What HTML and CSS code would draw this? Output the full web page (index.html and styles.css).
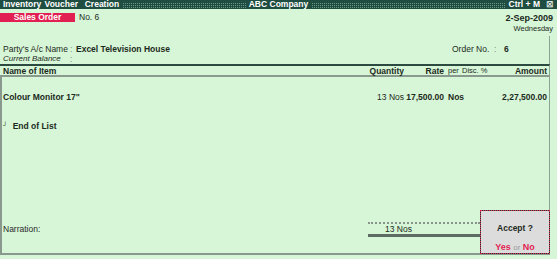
FILE: index.html
```html
<!DOCTYPE html>
<html lang="en">
<head>
  <meta charset="UTF-8">
  <title>Inventory Voucher Creation</title>
  <link rel="stylesheet" href="styles.css">
</head>
<body>

  <div class="titlebar">
    <div class="tb-side">
      <span class="tb-left">Inventory Voucher&nbsp; Creation</span>
      <span class="dots"></span>
    </div>
    <span class="tb-mid">ABC Company</span>
    <div class="tb-side">
      <span class="dots"></span>
      <span class="tb-right">Ctrl + M</span>
      <span class="close">&#x22A0;</span>
    </div>
  </div>

  <div class="head">
    <div class="row-top">
      <div class="vtype">Sales Order</div>
      <div class="vno">No. 6</div>
      <div class="date">
        <div class="d1">2-Sep-2009</div>
        <div class="d2">Wednesday</div>
      </div>
    </div>
    <div class="party">
      <div class="row-party">
        <span class="lbl">Party's A/c Name</span>
        <span class="colon">:</span>
        <b>Excel Television House</b>
        <span class="order">Order No.</span>
        <span class="colon wide">:</span>
        <b class="ordno">6</b>
      </div>
      <div class="row-bal">
        <span class="lbl">Current Balance</span>
        <span class="colon">:</span>
      </div>
    </div>
  </div>

  <div class="cols">
    <span class="c-name">Name of Item</span>
    <span class="c-qty">Quantity</span>
    <span class="c-rate">Rate</span>
    <span class="c-per">per</span>
    <span class="c-disc">Disc. %</span>
    <span class="c-amt">Amount</span>
  </div>

  <div class="body">
    <div class="item">
      <span class="c-name"><b>Colour Monitor 17"</b></span>
      <span class="c-qty">13 Nos</span>
      <span class="c-rate"><b>17,500.00</b></span>
      <span class="c-per"><b>Nos</b></span>
      <span class="c-disc"></span>
      <span class="c-amt">2,27,500.00</span>
    </div>
    <div class="eol"><span class="mark">&#x2518;</span> End of List</div>

    <div class="foot">
      <div class="narration">Narration:</div>
      <div class="total">
        <div class="total-val">13 Nos</div>
      </div>
      <div class="accept">
        <div class="q">Accept ?</div>
        <div class="yn"><b>Yes</b> <span class="or">or</span> <b>No</b></div>
      </div>
    </div>
  </div>

</body>
</html>
```

FILE: styles.css
```css
* {
  box-sizing: border-box;
}
body {
  margin: 0;
  background: #d7f6d7;
  font-family: "Liberation Sans", Arial, sans-serif;
  font-size: 8.5px;
  color: #1c2a22;
  width: 557px;
  height: 259px;
  overflow: hidden;
}

.titlebar {
  height: 9px;
  background: #1f4d41;
  color: #ffffff;
  font-weight: bold;
  font-size: 8.5px;
  line-height: 9px;
  display: grid;
  grid-template-columns: 1fr auto 1fr;
  align-items: center;
  padding: 0 3px;
  white-space: nowrap;
}
.tb-side {
  display: flex;
  align-items: center;
}
.dots {
  flex: 1;
  height: 6px;
  margin: 0 3px;
  background-image:
    linear-gradient(90deg, #1f4d41 1px, transparent 1px),
    linear-gradient(#1f4d41 1px, #6a9686 1px);
  background-size: 2px 2px;
}
.tb-left {
  word-spacing: 1px;
}
.close {
  margin-left: 6px;
  font-size: 9px;
  font-weight: normal;
}

.row-top {
  display: flex;
  align-items: flex-start;
  height: 27px;
  padding-top: 4px;
}
.vtype {
  width: 75px;
  height: 9px;
  line-height: 9px;
  background: #e21f52;
  color: #ffffff;
  font-weight: bold;
  text-align: center;
}
.vno {
  margin-left: 4px;
  line-height: 9px;
}
.date {
  margin-left: auto;
  margin-right: 4px;
  text-align: right;
}
.d1 {
  font-weight: bold;
  font-size: 9px;
  line-height: 10px;
}
.d2 {
  font-size: 7.5px;
  line-height: 11px;
}

.party {
  height: 28px;
  padding-top: 8px;
  border-right: 1px solid #8aa592;
  margin-right: 7px;
}
.row-party, .row-bal {
  display: flex;
  height: 10px;
  line-height: 10px;
  padding-left: 3px;
  white-space: nowrap;
}
.lbl {
  width: 67px;
  flex-shrink: 0;
}
.row-bal .lbl {
  font-style: italic;
  font-size: 8px;
}
.colon {
  width: 6px;
  color: #7c8a80;
}
.order {
  margin-left: auto;
  width: 42px;
}
.colon.wide {
  width: 10px;
}
.ordno {
  width: 45px;
}

.cols, .item {
  display: flex;
  align-items: center;
  padding-left: 3px;
  white-space: nowrap;
}
.cols {
  height: 13px;
  border-top: 2px solid #2c4a40;
  border-bottom: 2px solid #8a998e;
  border-right: 1px solid #8aa592;
  margin-right: 7px;
  font-weight: bold;
}
.cols .c-per, .cols .c-disc {
  font-weight: normal;
  font-size: 7.5px;
}
.c-name {
  flex: 1;
}
.c-qty {
  width: 60px;
  text-align: right;
}
.c-rate {
  width: 40px;
  text-align: right;
}
.c-per {
  width: 18px;
  padding-left: 4px;
}
.c-disc {
  width: 18px;
}
.c-amt {
  width: 69px;
  text-align: right;
  padding-right: 2px;
}

.body {
  height: 178px;
  border-left: 2px solid #8a998e;
  border-right: 1px solid #8aa592;
  border-bottom: 2px solid #8a998e;
  margin-right: 7px;
  display: flex;
  flex-direction: column;
}
.item {
  margin-top: 15px;
  height: 10px;
  padding-left: 1px;
}
.item .c-amt {
  font-weight: bold;
}
.eol {
  margin-top: 18px;
  line-height: 10px;
  padding-left: 1px;
  font-weight: bold;
}
.mark {
  font-size: 6px;
  vertical-align: 2px;
  margin-right: 3px;
}

.foot {
  margin-top: auto;
  display: flex;
  align-items: flex-end;
}
.narration {
  flex: 1;
  line-height: 10px;
  margin-bottom: 19px;
  padding-left: 1px;
  color: #2a2a2a;
}
.total {
  width: 112px;
  margin-bottom: 16px;
  border-top: 2px dotted #8a938c;
  border-bottom: 3px solid #5e6d63;
}
.total-val {
  height: 10px;
  line-height: 10px;
  padding-left: 17px;
}
.accept {
  width: 70px;
  height: 44px;
  background: #dcdcdc;
  border: 1px solid #1e4438;
  outline: 1px dotted #e21f52;
  outline-offset: -1px;
  text-align: center;
  display: flex;
  flex-direction: column;
  margin-bottom: -1px;
  margin-right: -1px;
}
.q {
  font-weight: bold;
  line-height: 10px;
  margin-top: 12px;
}
.yn {
  margin-top: auto;
  line-height: 10px;
  margin-bottom: 0;
  color: #e21f52;
  font-size: 9px;
}
.or {
  color: #9a9a9a;
  font-size: 8px;
}
```
